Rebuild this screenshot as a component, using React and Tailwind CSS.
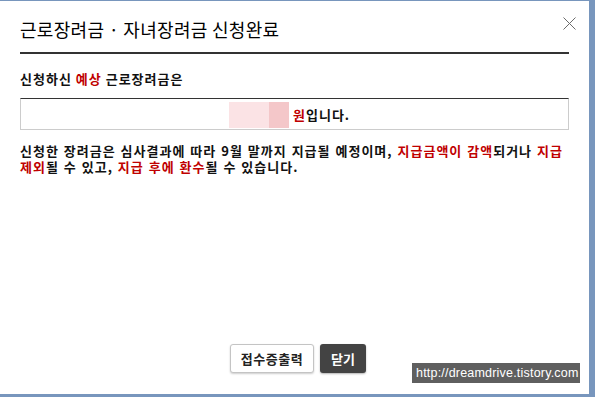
export default function App() {
  const font = { fontFamily: '"Noto Sans CJK KR", "Liberation Sans", sans-serif' };

  return (
    <div className="w-[595px] h-[397px] bg-[#7896bd] pt-px pr-[6px] pb-[3px]" style={font}>
      <div className="relative bg-white h-full flex flex-col px-5">
        {/* close */}
        <button className="absolute left-[563px] top-[16px] w-[13px] h-[13px]">
          <svg width="13" height="13" viewBox="0 0 13 13">
            <path d="M0.5 0.5 L12.5 12.5 M12.5 0.5 L0.5 12.5" stroke="#6b6b6b" strokeWidth="1" fill="none" />
          </svg>
        </button>

        <div className="pt-4 pb-[11px] border-b-2 border-[#333]">
          <h1 className="text-[18px] leading-[24px] text-black font-normal tracking-[0.3px]">
            근로장려금 · 자녀장려금 신청완료
          </h1>
        </div>

        <p className="mt-[17px] text-[13px] leading-4 font-bold text-[#111] tracking-[1px]">
          신청하신 <span className="text-[#c00000]">예상</span> 근로장려금은
        </p>

        <div className="mt-[11px] h-8 border border-[#ccc] border-t-[#333] flex items-start pt-[3px] pl-[208px]">
          <span className="w-10 h-[26px] bg-[#fbe3e5]" />
          <span className="w-5 h-[26px] bg-[#f4c7c9]" />
          <span className="ml-1 mt-[5px] text-[13px] leading-4 font-bold text-[#111] tracking-[1px]">
            <span className="text-[#c00000]">원</span>입니다.
          </span>
        </div>

        <p className="mt-[13px] text-[13px] leading-4 font-bold text-[#111] tracking-[1px] [word-spacing:1px] break-keep">
          신청한 장려금은 심사결과에 따라 9월 말까지 지급될 예정이며,{' '}
          <span className="text-[#c00000]">지급금액이 감액</span>되거나{' '}
          <span className="text-[#c00000]">지급 제외</span>될 수 있고,{' '}
          <span className="text-[#c00000]">지급 후에 환수</span>될 수 있습니다.
        </p>

        <div className="mt-auto pb-[21px] pl-[7px] flex justify-center gap-[6px]">
          <button className="w-[84px] h-[29px] bg-white border border-[#c4c4c4] rounded-[3px] shadow-[0_1px_2px_rgba(0,0,0,0.2)] text-[13px] font-bold text-[#222] tracking-[0.5px]">
            접수증출력
          </button>
          <button className="w-[46px] h-[29px] bg-[#434343] rounded-[3px] shadow-[0_1px_2px_rgba(0,0,0,0.3)] text-[13px] font-bold text-white">
            닫기
          </button>
        </div>

        <div className="absolute left-[412px] top-[362px] w-[168px] h-5 bg-[#5f5f5f] text-white text-[12.5px] leading-5 pl-[4px] tracking-[0.2px]" style={{ fontFamily: '"Liberation Sans", sans-serif' }}>
          http://dreamdrive.tistory.com
        </div>
      </div>
    </div>
  );
}
